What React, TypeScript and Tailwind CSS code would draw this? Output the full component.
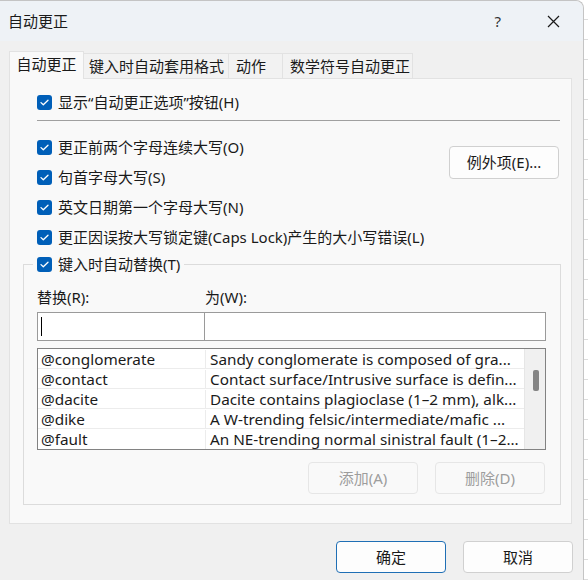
import React from "react";

const font = "font-['Noto_Sans','Noto_Sans_CJK_SC',sans-serif]";

function Check({ label }: { label: string }) {
  return (
    <div className="flex h-[20px] items-center gap-[6px]">
      <span className="flex h-[15px] w-[15px] shrink-0 items-center justify-center rounded-[3px] bg-[#005fb8]">
        <svg width="9" height="7" viewBox="0 0 9 7" fill="none">
          <path d="M1 3.6 L3.3 5.8 L8 1.2" stroke="white" strokeWidth="1.3" strokeLinecap="round" strokeLinejoin="round" />
        </svg>
      </span>
      <span className="whitespace-nowrap text-[15px] leading-[20px] text-[#1a1a1a]">{label}</span>
    </div>
  );
}

const rows = [
  ["@conglomerate", "Sandy conglomerate is composed of gra..."],
  ["@contact", "Contact surface/Intrusive surface is defin..."],
  ["@dacite", "Dacite contains plagioclase (1–2 mm), alk..."],
  ["@dike", "A W-trending felsic/intermediate/mafic ..."],
  ["@fault", "An NE-trending normal sinistral fault (1–2..."],
];

export default function App() {
  return (
    <div className={`flex h-[580px] w-[588px] overflow-hidden bg-white ${font}`}>
      {/* dialog */}
      <div className="flex h-full w-[584px] shrink-0 flex-col rounded-tr-[8px] border-r border-t border-[#c4c4c4] bg-[#f0f0f0]">
        {/* title bar */}
        <div className="flex h-[40px] shrink-0 items-center rounded-tr-[8px] bg-[#eef2f6] pl-[8px]">
          <span className="text-[15px] text-[#1a1a1a]">自动更正</span>
          <span className="ml-auto mr-[46px] text-[15px] text-[#333]">?</span>
          <svg className="mr-[23px]" width="13" height="13" viewBox="0 0 13 13">
            <path d="M1 1 L12 12 M12 1 L1 12" stroke="#1a1a1a" strokeWidth="1.2" />
          </svg>
        </div>

        {/* tabs */}
        <div className="mt-[10px] flex h-[27px] items-end pl-[9px] text-[15px] text-[#1a1a1a]">
          <div className="relative z-10 -mb-[1px] flex h-[28px] w-[75px] items-center justify-center border border-b-0 border-[#e2e2e2] bg-[#f9f9f9] pb-[2px]">
            自动更正
          </div>
          <div className="flex h-[25px] w-[145px] items-center border-t border-r border-[#e2e2e2] bg-[#f2f2f2] pl-[5px]">
            键入时自动套用格式
          </div>
          <div className="flex h-[25px] w-[54px] items-center border-t border-r border-[#e2e2e2] bg-[#f2f2f2] pl-[7px]">
            动作
          </div>
          <div className="flex h-[25px] w-[130px] items-center border-t border-r border-[#e2e2e2] bg-[#f2f2f2] pl-[7px]">
            数学符号自动更正
          </div>
        </div>

        {/* tab panel */}
        <div className="ml-[9px] flex h-[446px] w-[563px] flex-col border border-[#e2e2e2] bg-[#f9f9f9]">
          <div className="pl-[27px] pr-[11px] pt-[13px]">
            <Check label="显示“自动更正选项”按钮(H)" />
            <div className="mt-[8px] h-px bg-[#a0a0a0]" />
            <div className="mt-[16px] flex justify-between">
              <div className="flex flex-col gap-[10px]">
                <Check label="更正前两个字母连续大写(O)" />
                <Check label="句首字母大写(S)" />
                <Check label="英文日期第一个字母大写(N)" />
                <Check label="更正因误按大写锁定键(Caps Lock)产生的大小写错误(L)" />
              </div>
              <button className="mr-[1px] mt-[9px] h-[33px] w-[110px] rounded-[4px] border border-[#d0d0d0] bg-[#fdfdfd] text-[15px] text-[#1a1a1a]">
                例外项(E)...
              </button>
            </div>
          </div>

          <fieldset className="ml-[13px] mr-[10px] mt-[7px] border border-[#dcdcdc] pb-[10px] pl-[13px] pr-[14px]">
            <legend className="-ml-[4px] bg-[#f9f9f9] px-[4px]">
              <Check label="键入时自动替换(T)" />
            </legend>
            <div className="mt-[13px] grid grid-cols-[168px_1fr] text-[15px] leading-[20px] text-[#1a1a1a]">
              <span>替换(R):</span>
              <span>为(W):</span>
            </div>
            <div className="mt-[5px] grid grid-cols-[168px_1fr]">
              <div className="flex h-[29px] items-center border border-[#9a9a9a] bg-white pl-[3px]">
                <span className="h-[19px] w-px bg-black" />
              </div>
              <div className="h-[29px] border border-l-0 border-[#9a9a9a] bg-white" />
            </div>
            <div className="mt-[7px] flex h-[102px] border border-[#828282] bg-white">
              <div className="flex w-[486px] flex-col">
                {rows.map(([k, v]) => (
                  <div key={k} className="flex h-[20px] border-b border-[#ececec] pt-[1px] text-[15.3px] leading-[19px] text-[#1a1a1a] last:border-b-0">
                    <span className="w-[168px] shrink-0 border-r border-[#ececec] pl-[3px]">{k}</span>
                    <span className="whitespace-nowrap pl-[4px]">{v}</span>
                  </div>
                ))}
              </div>
              <div className="flex flex-1 justify-center border-l border-[#e6e6e6] bg-[#f0f0f0] pt-[21px]">
                <div className="ml-[2px] h-[21px] w-[6px] rounded-[2px] bg-[#858585]" />
              </div>
            </div>
            <div className="mt-[12px] flex justify-end gap-[17px] pr-[1px]">
              <button className="h-[32px] w-[110px] rounded-[4px] border border-[#e6e6e6] bg-[#f9f9f9] text-[15px] text-[#9d9d9d]">
                添加(A)
              </button>
              <button className="h-[32px] w-[110px] rounded-[4px] border border-[#e6e6e6] bg-[#f9f9f9] text-[15px] text-[#9d9d9d]">
                删除(D)
              </button>
            </div>
          </fieldset>
        </div>

        {/* footer */}
        <div className="mt-[17px] flex justify-end gap-[17px] pr-[10px]">
          <button className="h-[32px] w-[110px] rounded-[4px] border border-[#1f6fb5] bg-[#fdfdfd] text-[15px] text-[#1a1a1a]">
            确定
          </button>
          <button className="h-[32px] w-[110px] rounded-[4px] border border-[#d0d0d0] bg-[#fdfdfd] text-[15px] text-[#1a1a1a]">
            取消
          </button>
        </div>
      </div>

      {/* sheet behind the dialog */}
      <div className="flex flex-1 flex-col">
        {Array.from({ length: 29 }).map((_, i) => (
          <div key={i} className="h-[20px] shrink-0 border-b border-[#dcdcdc]" />
        ))}
      </div>
    </div>
  );
}
